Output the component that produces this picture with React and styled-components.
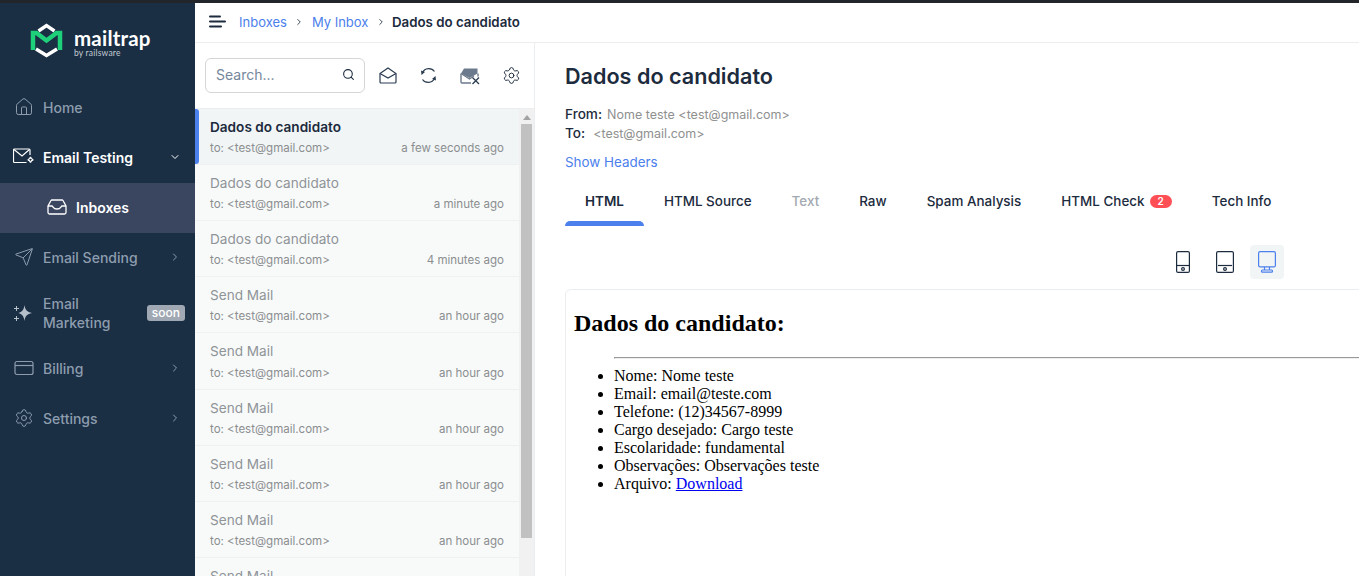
import styled, { createGlobalStyle } from "styled-components";
import { ChevronRight, ChevronDown, Search, Send, Settings, House } from "lucide-react";

const GlobalStyle = createGlobalStyle`
  html, body { margin: 0; padding: 0; height: 100%; overflow: hidden; }
  body { font-family: Inter, "Liberation Sans", sans-serif; background: #fff; }
  * { box-sizing: border-box; }
`;

const colors = {
  navy: "#1a2e44",
  navyLight: "#3a4560",
  navText: "#8d9dae",
  blue: "#4c80ec",
  text: "#1c2b3d",
  grey: "#8f9090",
  line: "#ebeef0",
};

const Page = styled.div`
  display: flex;
  flex-direction: column;
  width: 1359px;
  height: 576px;
  overflow: hidden;
  border-top: 3px solid #22262a;
`;

const Body = styled.div`
  flex: 1;
  display: flex;
  min-height: 0;
`;

const Sidebar = styled.nav`
  width: 195px;
  flex: none;
  background: ${colors.navy};
`;

const LogoBox = styled.div`
  height: 80px;
  display: flex;
  align-items: flex-start;
  padding: 19px 0 0 30px;
  gap: 10px;
`;

const LogoWords = styled.div`
  color: #fff;
  display: flex;
  flex-direction: column;
  b {
    font-family: Lato, sans-serif;
    font-weight: 700;
    font-size: 20.5px;
    line-height: 22px;
    margin-top: 5px;
    letter-spacing: 0.2px;
  }
  span {
    font-family: Lato, sans-serif;
    font-size: 8.5px;
    line-height: 9px;
    color: #c3cad2;
    letter-spacing: 0.2px;
  }
`;

const NavRow = styled.div`
  display: flex;
  align-items: center;
  height: ${(p) => (p.$tall ? "61px" : "50px")};
  padding: 0 0 2px 14px;
  color: ${(p) => (p.$active ? "#fff" : colors.navText)};
  font-size: 14px;
  font-weight: ${(p) => (p.$active ? 600 : 500)};
  line-height: 19px;
`;

const SubRow = styled(NavRow)`
  background: ${colors.navyLight};
  padding-left: 47px;
  color: #fff;
  font-weight: 600;
`;

const NavIcon = styled.span`
  display: flex;
  width: 29px;
  flex: none;
`;

const NavLabel = styled.span`
  flex: 1;
`;

const NavArrow = styled.span`
  display: flex;
  width: 14px;
  margin-right: 12px;
  color: ${(p) => (p.$active ? "#fff" : colors.navText)};
`;

const Soon = styled.span`
  font-size: 12px;
  font-weight: 500;
  line-height: 16px;
  padding: 0 5px;
  border-radius: 3px;
  margin-right: 10px;
  background: #a0a9b3;
  color: #fff;
`;

const Workspace = styled.div`
  flex: 1;
  display: flex;
  flex-direction: column;
  min-width: 0;
`;

const Crumbs = styled.header`
  height: 40px;
  flex: none;
  display: flex;
  align-items: center;
  padding: 0 0 2px 14px;
  border-bottom: 1px solid ${colors.line};
  font-size: 13px;
  font-weight: 400;
  color: ${colors.blue};
`;

const BurgerBox = styled.span`
  display: flex;
  margin-right: 13px;
`;

const Sep = styled.span`
  display: flex;
  margin: 0 7.5px;
  color: ${colors.text};
`;

const Current = styled.span`
  margin-left: -1.5px;
  color: ${colors.text};
  font-size: 13.3px;
  font-weight: 600;
`;

const Split = styled.div`
  flex: 1;
  display: flex;
  min-height: 0;
`;

const ListPane = styled.section`
  width: 340px;
  flex: none;
  display: flex;
  flex-direction: column;
  border-right: 1px solid ${colors.line};
`;

const Toolbar = styled.div`
  height: 66px;
  flex: none;
  display: flex;
  align-items: center;
  padding-left: 10px;
  border-bottom: 1px solid ${colors.line};
`;

const SearchBox = styled.div`
  width: 160px;
  height: 35px;
  display: flex;
  align-items: center;
  justify-content: space-between;
  padding: 0 9px 2px 10px;
  border: 1px solid #d3d5d7;
  border-radius: 6px;
  font-size: 14px;
  color: #74879b;
`;

const ToolIcons = styled.div`
  display: grid;
  grid-template-columns: repeat(4, 41.3px);
  justify-items: center;
  align-items: center;
  color: ${colors.text};
  margin-left: 2px;
`;

const ListScroll = styled.div`
  flex: 1;
  display: flex;
  min-height: 0;
  overflow: hidden;
`;

const Messages = styled.ul`
  flex: 1;
  margin: 0;
  padding: 0;
  list-style: none;
  overflow: hidden;
`;

const Message = styled.li`
  position: relative;
  height: 56.11px;
  padding: 9px 15px 0 15px;
  border-bottom: 1px solid #eef0f1;
  background: ${(p) => (p.$selected ? "#f1f5f6" : "#f8fafa")};
  &::before {
    content: "";
    display: ${(p) => (p.$selected ? "block" : "none")};
    position: absolute;
    left: 0;
    top: 0;
    bottom: 0;
    width: 4px;
    background: ${colors.blue};
    border-radius: 0 3px 3px 0;
  }
`;

const Subject = styled.div`
  font-size: 13.6px;
  line-height: 18px;
  font-weight: ${(p) => (p.$selected ? 600 : 400)};
  color: ${(p) => (p.$selected ? colors.text : "#8f9498")};
`;

const Meta = styled.div`
  display: flex;
  justify-content: space-between;
  margin-top: 4.1px;
  font-size: 11.52px;
  line-height: 16px;
  color: #8b8e90;
`;

const Track = styled.div`
  width: 15px;
  flex: none;
  background: #f1f1f1;
  display: flex;
  flex-direction: column;
  align-items: center;
`;

const TrackArrow = styled.span`
  margin-top: 6px;
  width: 0;
  height: 0;
  border-left: 4px solid transparent;
  border-right: 4px solid transparent;
  border-bottom: 5px solid #a3a3a3;
`;

const Thumb = styled.span`
  width: 11px;
  height: 414px;
  margin-top: 4px;
  background: #c1c1c1;
`;

const Detail = styled.main`
  flex: 1;
  min-width: 0;
  padding: 20px 0 0 30px;
  overflow: hidden;
`;

const Title = styled.h1`
  margin: 0;
  font-size: 21.6px;
  line-height: 26px;
  font-weight: 600;
  color: ${colors.text};
`;

const Addresses = styled.div`
  margin-top: 16px;
  font-size: 13.6px;
  font-weight: 500;
  line-height: 19px;
  color: ${colors.text};
`;

const AddressRow = styled.div`
  display: flex;
  align-items: baseline;
  height: 19px;
`;

const AddressValue = styled.span`
  font-size: 12.5px;
  font-weight: 400;
  color: ${colors.grey};
  margin-left: ${(p) => p.$gap}px;
`;

const HeadersLink = styled.div`
  margin-top: 10px;
  font-size: 13.4px;
  line-height: 18px;
  color: ${colors.blue};
`;

const Tabs = styled.div`
  display: flex;
  margin-top: 9px;
  font-size: 13.44px;
  font-weight: 500;
  color: ${colors.text};
`;

const Tab = styled.div`
  position: relative;
  display: flex;
  align-items: center;
  gap: 5px;
  height: 46px;
  padding: 0 20px 4px;
  color: ${(p) => (p.$disabled ? "#a3a9b1" : colors.text)};
  font-weight: ${(p) => (p.$active ? 600 : 500)};
  &::after {
    content: "";
    display: ${(p) => (p.$active ? "block" : "none")};
    position: absolute;
    left: 0;
    right: 0;
    bottom: 0;
    height: 5px;
    background: ${colors.blue};
    border-radius: 5px 5px 0 0;
  }
`;

const Badge = styled.span`
  font-size: 10px;
  line-height: 13px;
  font-weight: 600;
  color: #fff;
  background: #ff4f55;
  border-radius: 7px;
  padding: 0 8px;
`;

const Devices = styled.div`
  display: flex;
  justify-content: flex-end;
  gap: 8px;
  margin-top: 19px;
  padding-right: 75px;
`;

const DeviceButton = styled.span`
  width: 34px;
  height: 34px;
  display: flex;
  align-items: center;
  justify-content: center;
  border-radius: 4px;
  background: ${(p) => (p.$active ? "#f1f5f6" : "transparent")};
  color: ${(p) => (p.$active ? colors.blue : colors.text)};
`;

const Frame = styled.div`
  margin-top: 10px;
  width: 900px;
  height: 400px;
  padding: 0 8px;
  border: 1px solid ${colors.line};
  border-radius: 6px 0 0 0;
  font-family: "Liberation Serif", serif;
  font-size: 16px;
  line-height: 18px;
  color: #000;
  display: flow-root;
  h2 {
    font-size: 24px;
    line-height: 27px;
    margin: 19.92px 0;
  }
  ul {
    margin: 0;
    padding-left: 40px;
  }
  hr {
    margin: 8px 0;
  }
  a {
    color: #0000ee;
  }
`;

const LogoMark = () => (
  <svg width="34" height="36" viewBox="0 0 34 36" fill="none">
    <path d="M8.500 9 16.500 3.500 24.500 9M6 27 16.500 33.500 27 27" stroke="#fff" strokeWidth="3.400" />
    <path d="M3 28V11H6.500L16.500 18.500 26.500 11H30V28" stroke="#1fd07a" strokeWidth="4.500" />
  </svg>
);

const TestingIcon = () => (
  <svg width="22" height="18" viewBox="0 0 22 18" fill="none" stroke="currentColor" strokeWidth="1.200" style={{ marginLeft: -1 }}>
    <path d="M13.500 14.500H1.500a1 1 0 0 1-1-1V2a1 1 0 0 1 1-1H16a1 1 0 0 1 1 1v5" />
    <path d="M1 1.500 9 8l7.500-6.500" />
    <path d="M17.500 9c.4 1.800 1 2.400 2.800 2.800-1.800.4-2.400 1-2.800 2.800-.4-1.800-1-2.400-2.800-2.800 1.800-.4 2.400-1 2.800-2.800Z" />
  </svg>
);

const InboxIcon = () => (
  <svg width="20" height="16" viewBox="0 0 20 16" fill="none" stroke="currentColor" strokeWidth="1.300">
    <path d="M1 7V13.500a1.500 1.500 0 0 0 1.500 1.500h15a1.500 1.500 0 0 0 1.500-1.500V7L16 1.500A1 1 0 0 0 15 1H5a1 1 0 0 0-1 .5Z" />
    <path d="M1 7h4c1 0 1 3 5 3s4-3 5-3h4" />
  </svg>
);

const SparkIcon = () => (
  <svg width="20" height="20" viewBox="0 0 20 20" fill="none">
    <path d="M10.500 2c.7 5 2.500 7 7.500 8-5 1-6.800 3-7.500 8-.7-5-2.500-7-6-8 3.500-1 5.300-3 6-8Z" fill="#b6c0ca" />
    <path d="M2.500 3v5M0 5.500h5M2.500 13v5M0 15.500h5" stroke="#b6c0ca" strokeWidth="1" />
  </svg>
);

const CardIcon = () => (
  <svg width="20" height="16" viewBox="0 0 20 16" fill="none" stroke="currentColor" strokeWidth="1.200">
    <rect x="1" y="1.500" width="18" height="13" rx="2" />
    <path d="M1 5.500h18" />
  </svg>
);

const Burger = () => (
  <svg width="17" height="13" viewBox="0 0 17 13" stroke={colors.text} strokeWidth="2" strokeLinecap="round">
    <path d="M1 1.500h10M1 6.500h15M1 11.500h11" />
  </svg>
);

const OpenMailIcon = () => (
  <svg width="18" height="17" viewBox="0 0 18 17" fill="none" stroke="#2b3c50" strokeWidth="1.200">
    <path d="M1 6.500 9 1l8 5.500V15a1 1 0 0 1-1 1H2a1 1 0 0 1-1-1Z" />
    <path d="M1 6.500 9 11l8-4.500" />
  </svg>
);

const RefreshIcon = () => (
  <svg width="17" height="17" viewBox="0 0 17 17" fill="none">
    <path d="M2.500 5.500A7 7 0 0 1 14.500 4.500" stroke="#2b3c50" strokeWidth="1.200" />
    <path d="M14.500 11.500A7 7 0 0 1 2.500 12.500" stroke="#2b3c50" strokeWidth="1.200" />
    <path d="M1 3.500 5 5 1.500 8Z" fill="#2b3c50" />
    <path d="M16 13.500 12 12l3.500-3Z" fill="#2b3c50" />
  </svg>
);

const ClearIcon = () => (
  <svg width="20" height="18" viewBox="0 0 20 18" fill="none">
    <path d="M1 6.500 4 1.500h13.500V6.500L9.500 11Z" fill="#6b7a8c" />
    <path d="M1 6.500V15a1 1 0 0 0 1 1h9M18 6.500v3" stroke="#6b7a8c" strokeWidth="1.400" />
    <path d="M1 6.500 9.500 12 14 9" stroke="#6b7a8c" strokeWidth="1.200" />
    <path d="M12.500 10.500l6.500 6.500M19 10.500 12.500 17" stroke="#2b3c50" strokeWidth="1.300" />
  </svg>
);

const PhoneIcon = () => (
  <svg width="14" height="22" viewBox="0 0 14 22" fill="none" stroke="currentColor" strokeWidth="1.200">
    <rect x="0.600" y="0.600" width="12.800" height="20.800" rx="1.500" />
    <path d="M0.600 14.500h12.800" />
    <circle cx="7" cy="18" r="1.400" />
  </svg>
);

const TabletIcon = () => (
  <svg width="18" height="22" viewBox="0 0 18 22" fill="none" stroke="currentColor" strokeWidth="1.200">
    <rect x="0.600" y="0.600" width="16.800" height="20.800" rx="1.500" />
    <path d="M2 14.500h14" />
    <circle cx="9" cy="18" r="1.400" />
  </svg>
);

const DesktopIcon = () => (
  <svg width="18" height="22" viewBox="0 0 18 22" fill="none" stroke="currentColor" strokeWidth="1.200">
    <rect x="0.600" y="0.600" width="16.800" height="15.300" rx="1.500" />
    <path d="M6.500 16v3M11.500 16v3" />
    <rect x="3.500" y="19" width="11" height="2.200" rx="1" />
  </svg>
);

const messages = [
  { subject: "Dados do candidato", time: "a few seconds ago", selected: true },
  { subject: "Dados do candidato", time: "a minute ago" },
  { subject: "Dados do candidato", time: "4 minutes ago" },
  { subject: "Send Mail", time: "an hour ago" },
  { subject: "Send Mail", time: "an hour ago" },
  { subject: "Send Mail", time: "an hour ago" },
  { subject: "Send Mail", time: "an hour ago" },
  { subject: "Send Mail", time: "an hour ago" },
  { subject: "Send Mail", time: "an hour ago" },
];

const tabs = ["HTML", "HTML Source", "Text", "Raw", "Spam Analysis", "HTML Check", "Tech Info"];

const fields = [
  "Nome: Nome teste",
  "Email: email@teste.com",
  "Telefone: (12)34567-8999",
  "Cargo desejado: Cargo teste",
  "Escolaridade: fundamental",
  "Observações: Observações teste",
];

const App = () => {
  return (
    <Page>
      <GlobalStyle />
      <Body>
        <Sidebar>
          <LogoBox>
            <LogoMark />
            <LogoWords>
              <b>mailtrap</b>
              <span>by railsware</span>
            </LogoWords>
          </LogoBox>
          <NavRow>
            <NavIcon><House size={20} strokeWidth={1.2} /></NavIcon>
            <NavLabel>Home</NavLabel>
          </NavRow>
          <NavRow $active>
            <NavIcon><TestingIcon /></NavIcon>
            <NavLabel>Email Testing</NavLabel>
            <NavArrow $active><ChevronDown size={12} /></NavArrow>
          </NavRow>
          <SubRow>
            <NavIcon><InboxIcon /></NavIcon>
            <NavLabel>Inboxes</NavLabel>
          </SubRow>
          <NavRow>
            <NavIcon><Send size={20} strokeWidth={1.2} /></NavIcon>
            <NavLabel>Email Sending</NavLabel>
            <NavArrow><ChevronRight size={12} /></NavArrow>
          </NavRow>
          <NavRow $tall>
            <NavIcon><SparkIcon /></NavIcon>
            <NavLabel>Email<br />Marketing</NavLabel>
            <Soon>soon</Soon>
          </NavRow>
          <NavRow>
            <NavIcon><CardIcon /></NavIcon>
            <NavLabel>Billing</NavLabel>
            <NavArrow><ChevronRight size={12} /></NavArrow>
          </NavRow>
          <NavRow>
            <NavIcon><Settings size={20} strokeWidth={1.2} /></NavIcon>
            <NavLabel>Settings</NavLabel>
            <NavArrow><ChevronRight size={12} /></NavArrow>
          </NavRow>
        </Sidebar>
        <Workspace>
          <Crumbs>
            <BurgerBox><Burger /></BurgerBox>
            Inboxes
            <Sep><ChevronRight size={10} strokeWidth={2} /></Sep>
            My Inbox
            <Sep><ChevronRight size={10} strokeWidth={2} /></Sep>
            <Current>Dados do candidato</Current>
          </Crumbs>
          <Split>
            <ListPane>
              <Toolbar>
                <SearchBox>
                  Search...
                  <Search size={13} color={colors.text} />
                </SearchBox>
                <ToolIcons>
                  <OpenMailIcon />
                  <RefreshIcon />
                  <ClearIcon />
                  <Settings size={19} strokeWidth={1.2} />
                </ToolIcons>
              </Toolbar>
              <ListScroll>
                <Messages>
                  {messages.map((m, i) => (
                    <Message key={i} $selected={m.selected}>
                      <Subject $selected={m.selected}>{m.subject}</Subject>
                      <Meta>
                        <span>to: &lt;test@gmail.com&gt;</span>
                        <span>{m.time}</span>
                      </Meta>
                    </Message>
                  ))}
                </Messages>
                <Track>
                  <TrackArrow />
                  <Thumb />
                </Track>
              </ListScroll>
            </ListPane>
            <Detail>
              <Title>Dados do candidato</Title>
              <Addresses>
                <AddressRow>From:<AddressValue $gap={5}>Nome teste &lt;test@gmail.com&gt;</AddressValue></AddressRow>
                <AddressRow>To:<AddressValue $gap={8}>&lt;test@gmail.com&gt;</AddressValue></AddressRow>
              </Addresses>
              <HeadersLink>Show Headers</HeadersLink>
              <Tabs>
                {tabs.map((t) => (
                  <Tab key={t} $active={t === "HTML"} $disabled={t === "Text"}>
                    {t}
                    {t === "HTML Check" && <Badge>2</Badge>}
                  </Tab>
                ))}
              </Tabs>
              <Devices>
                <DeviceButton><PhoneIcon /></DeviceButton>
                <DeviceButton><TabletIcon /></DeviceButton>
                <DeviceButton $active><DesktopIcon /></DeviceButton>
              </Devices>
              <Frame>
                <h2>Dados do candidato:</h2>
                <ul>
                  <hr />
                  {fields.map((f) => <li key={f}>{f}</li>)}
                  <li>Arquivo: <a href="#download">Download</a></li>
                </ul>
              </Frame>
            </Detail>
          </Split>
        </Workspace>
      </Body>
    </Page>
  );
};

export default App;
